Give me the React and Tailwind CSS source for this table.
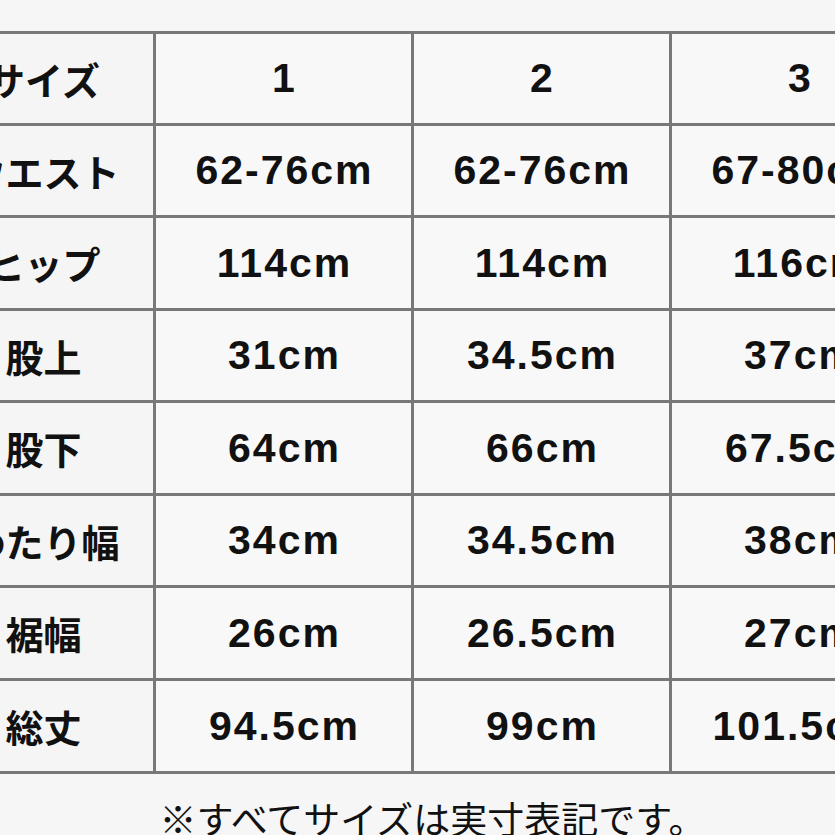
import React from "react";

const rows = [
  ["サイズ", "1", "2", "3"],
  ["ウエスト", "62-76cm", "62-76cm", "67-80cm"],
  ["ヒップ", "114cm", "114cm", "116cm"],
  ["股上", "31cm", "34.5cm", "37cm"],
  ["股下", "64cm", "66cm", "67.5cm"],
  ["わたり幅", "34cm", "34.5cm", "38cm"],
  ["裾幅", "26cm", "26.5cm", "27cm"],
  ["総丈", "94.5cm", "99cm", "101.5cm"],
];

const jp = { fontFamily: '"Noto Sans CJK JP", sans-serif' };
const num = { fontFamily: '"Liberation Sans", "Noto Sans CJK JP", sans-serif' };

export default function App() {
  return (
    <div className="w-[835px] h-[835px] overflow-hidden bg-[#f6f6f6] text-[#111]">
      <div className="pt-[31px] ml-[-72px]">
        <div className="grid w-max grid-cols-[222px_255px_255px_255px] grid-rows-[89px_89px_90px_89px_90px_89px_90px_90px] gap-[3px] p-[3px] bg-[#787878]">
          {rows.map((row, i) =>
            row.map((cell, j) => (
              <div
                key={i + "-" + j}
                className={
                  j === 0
                    ? "flex items-center justify-center bg-[#f5f5f5] text-[38px] font-bold leading-none pl-[3px]"
                    : "flex items-center justify-center bg-[#f8f8f8] text-[41px] font-bold leading-none tracking-[2px] pl-[2px]"
                }
                style={j === 0 ? jp : num}
              >
                {cell}
              </div>
            ))
          )}
        </div>
      </div>
      <p
        className="mt-[26px] pl-[30px] text-center text-[37px] leading-none whitespace-nowrap"
        style={jp}
      >
        ※すべてサイズは実寸表記です。
      </p>
    </div>
  );
}
